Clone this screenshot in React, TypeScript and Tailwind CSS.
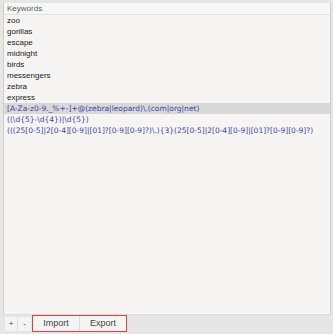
const keywords = ['zoo', 'gorillas', 'escape', 'midnight', 'birds', 'messengers', 'zebra', 'express'];

const patterns = [
  '[A-Za-z0-9._%+-]+@(zebra|leopard)\\.(com|org|net)',
  '((\\d{5}-\\d{4})|\\d{5})',
  '(((25[0-5]|2[0-4][0-9]|[01]?[0-9][0-9]?)\\.){3}(25[0-5]|2[0-4][0-9]|[01]?[0-9][0-9]?)',
];

const App = () => {
  return (
    <div
      className="w-[333px] h-[334px] bg-[#e6e6e6] flex flex-col pt-[3px] pl-[3px] pr-[2px] pb-[2px] text-[8px]"
      style={{ fontFamily: '"Liberation Sans", Arial, sans-serif' }}
    >
      <div className="flex-1 flex flex-col bg-[#f7f4f4] border-l border-r border-[#cfcfcf] overflow-hidden">
        <div className="h-[12px] flex items-center px-[3px] bg-[#f7f7f7] border-b border-[#e2e2e2] text-[#5a5a5a]">
          Keywords
        </div>
        {keywords.map((k) => (
          <div key={k} className="h-[11px] flex items-center px-[3px] text-[#1a1a1a]">
            {k}
          </div>
        ))}
        {patterns.map((p, i) => (
          <div
            key={p}
            className={`h-[11px] flex items-center px-[3px] text-[#3c44a8] whitespace-nowrap font-['DejaVu_Sans',sans-serif] text-[7.5px] ${
              i === 0 ? 'bg-[#d8d8d8]' : ''
            }`}
          >
            {p}
          </div>
        ))}
      </div>

      <div className="h-[18px] flex items-center border-t border-[#dcdcdc] bg-[#e6e6e6] pl-[2px] text-[#444]">
        <button className="w-[13px] h-[14px] flex items-center justify-center bg-[#f4f4f4] border-r border-[#dcdcdc]">
          +
        </button>
        <button className="w-[13px] h-[14px] flex items-center justify-center bg-[#f4f4f4]">
          -
        </button>
        <div className="ml-[1px] flex h-[17px] border-[1.5px] border-[#d9463c]">
          <button className="w-[47px] flex items-center justify-center bg-[#f4f4f4] border-r border-[#dcdcdc] text-[9px]">
            Import
          </button>
          <button className="w-[46px] flex items-center justify-center bg-[#f4f4f4] text-[9px]">
            Export
          </button>
        </div>
      </div>
    </div>
  );
};

export default App;
